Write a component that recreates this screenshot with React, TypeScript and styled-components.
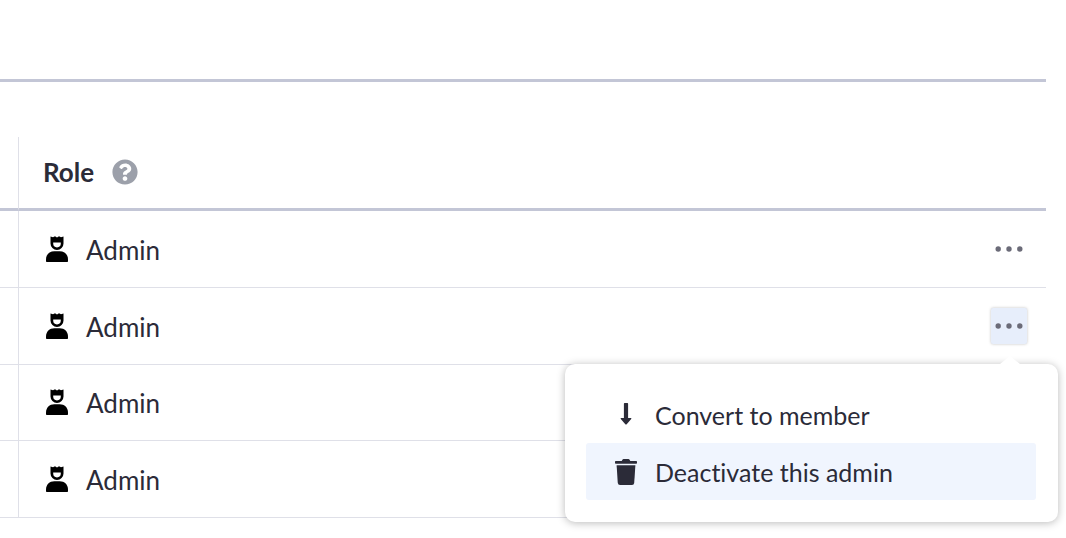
import React from "react";
import styled, { createGlobalStyle } from "styled-components";

const GlobalStyle = createGlobalStyle`
  *, *::before, *::after { box-sizing: border-box; }
  body {
    margin: 0;
    background: #fff;
    color: #2b2b38;
    font-family: Lato, "Liberation Sans", sans-serif;
    font-size: 26px;
    line-height: 32px;
    font-variant-ligatures: none;
  }
`;

const Page = styled.main`
  min-height: 100vh;
  padding-right: 20px;
`;

const Toolbar = styled.header`
  height: 82px;
  margin-bottom: 55px;
  border-bottom: 3px solid #c3c6d6;
`;

const Table = styled.table`
  width: 100%;
  height: 381px;
  border-collapse: separate;
  border-spacing: 0;
`;

const HeadCell = styled.th`
  height: 74px;
  padding: 0 0 2px 24px;
  border-bottom: 3px solid #c3c6d6;
  text-align: left;
  font-weight: 700;
`;

const Cell = styled.td`
  height: 76px;
  padding: 0 0 0 24px;
  border-bottom: 1px solid #dfe0e8;
`;

const GutterHead = styled.td`
  width: 19px;
  padding: 0;
  border-right: 1px solid #dfe0e8;
  border-bottom: 3px solid #c3c6d6;
`;

const GutterCell = styled.td`
  width: 19px;
  padding: 0;
  border-right: 1px solid #dfe0e8;
  border-bottom: 1px solid #dfe0e8;
`;

const HeadLabel = styled.div`
  display: flex;
  align-items: center;
  gap: 18px;
`;

const HelpButton = styled.button`
  display: flex;
  padding: 0;
  border: 0;
  background: none;
`;

const RowContent = styled.div`
  display: flex;
  align-items: center;
  justify-content: space-between;
  padding-right: 19px;
`;

const Role = styled.div`
  display: flex;
  align-items: center;
  gap: 18px;
  padding-left: 3px;
`;

const RoleName = styled.span`
  padding-top: 2px;
`;

const Actions = styled.div`
  position: relative;
`;

const MoreButton = styled.button<{ $open: boolean }>`
  display: flex;
  align-items: center;
  justify-content: center;
  width: 36px;
  height: 36px;
  padding: 0;
  border: 0;
  border-radius: 2px;
  color: #6b6b78;
  background: ${(p) => (p.$open ? "#e7eefb" : "transparent")};
  box-shadow: ${(p) => (p.$open ? "0 0 3px rgba(0, 0, 0, 0.25)" : "none")};
`;

const Menu = styled.div`
  position: absolute;
  z-index: 1;
  top: 56px;
  right: -31px;
  width: 493px;
  padding: 22px 22px 22px 21px;
  border-radius: 10px;
  background: #fff;
  box-shadow: 0 1px 8px rgba(0, 0, 0, 0.28);

  &::before {
    content: "";
    position: absolute;
    right: 38px;
    bottom: 100%;
    border: 10px solid transparent;
    border-top: 0;
    border-bottom: 8px solid #fff;
  }
`;

const MenuItem = styled.button<{ $active?: boolean }>`
  display: flex;
  align-items: center;
  gap: 18px;
  width: 100%;
  height: 57px;
  padding: 2px 29px 0;
  border: 0;
  border-radius: 3px;
  background: ${(p) => (p.$active ? "#f0f5fe" : "transparent")};
  color: inherit;
  font: inherit;
  font-size: 25px;
  font-variant-ligatures: none;
  text-align: left;
  white-space: nowrap;
`;

const AdminIcon = () => (
  <svg width="22" height="26" viewBox="0 0 22 26" aria-hidden="true">
    <path
      fillRule="evenodd"
      d="M4.5 0.4 7 1.3 9 0.2 11 1.4 13 0.2 15 1.3 17.5 0.4V7.4A6.5 6.5 0 0 1 4.5 7.4ZM7.2 6.4V7.6A3.8 3.8 0 0 0 14.8 7.6V6.4Z"
    />
    <path d="M0.8 26Q0 26 0 25.2V23.4C0 18.6 3.4 15.2 8.4 15.2H13.6C18.6 15.2 22 18.6 22 23.4V25.2Q22 26 21.2 26Z" />
  </svg>
);

const HelpIcon = () => (
  <svg width="26" height="26" viewBox="0 0 512 512" aria-hidden="true">
    <path
      fill="#9ca0aa"
      d="M504 256c0 136.997-111.043 248-248 248S8 392.997 8 256C8 119.083 119.043 8 256 8s248 111.083 248 248zM262.655 90c-54.497 0-89.255 22.957-116.549 63.758-3.536 5.286-2.353 12.415 2.715 16.258l34.699 26.31c5.205 3.947 12.621 3.008 16.665-2.122 17.864-22.658 30.113-35.797 57.303-35.797 20.429 0 45.698 13.148 45.698 32.958 0 14.976-12.363 22.667-32.534 33.976C247.128 238.528 216 254.941 216 296v4c0 6.627 5.373 12 12 12h56c6.627 0 12-5.373 12-12v-1.333c0-28.462 83.186-29.647 83.186-106.667 0-58.002-60.165-102-116.531-102zM256 338c-25.365 0-46 20.635-46 46 0 25.364 20.635 46 46 46s46-20.636 46-46c0-25.365-20.635-46-46-46z"
    />
  </svg>
);

const DotsIcon = () => (
  <svg width="28" height="6" viewBox="0 0 28 6" fill="currentColor" aria-hidden="true">
    <circle cx="3.2" cy="3" r="2.7" />
    <circle cx="14" cy="3" r="2.7" />
    <circle cx="24.8" cy="3" r="2.7" />
  </svg>
);

const ArrowDownIcon = () => (
  <svg width="22" height="26" viewBox="0 0 22 26" fill="currentColor" aria-hidden="true">
    <path d="M9.6 1H12.4Q13.1 1 13.1 1.7V16H15.8Q16.9 16.2 16.2 17.1L11.7 22.2Q11 22.9 10.3 22.2L5.8 17.1Q5.1 16.2 6.2 16H8.9V1.7Q8.9 1 9.6 1Z" />
  </svg>
);

const TrashIcon = () => (
  <svg width="22" height="26" viewBox="0 0 22 26" fill="currentColor" aria-hidden="true">
    <path d="M0.8 2H6.7L7.6 0.5Q7.9 0 8.5 0H13.5Q14.1 0 14.4 0.5L15.3 2H21.2Q22 2 22 2.8V4Q22 4.8 21.2 4.8H0.8Q0 4.8 0 4V2.8Q0 2 0.8 2Z" />
    <path d="M1.6 6.3H20.4L19.2 24Q19 26 17 26H5Q3 26 2.8 24Z" />
  </svg>
);

const admins = [1, 2, 3, 4];
const openAdmin = 2;
const hiddenActionsFrom = 3;

export default function App() {
  return (
    <>
      <GlobalStyle />
      <Page>
        <Toolbar />
        <Table>
          <thead>
            <tr>
              <GutterHead />
              <HeadCell scope="col">
                <HeadLabel>
                  Role
                  <HelpButton type="button" aria-label="About roles">
                    <HelpIcon />
                  </HelpButton>
                </HeadLabel>
              </HeadCell>
            </tr>
          </thead>
          <tbody>
            {admins.map((id) => (
              <tr key={id}>
                <GutterCell />
                <Cell>
                  <RowContent>
                    <Role>
                      <AdminIcon />
                      <RoleName>Admin</RoleName>
                    </Role>
                    {id < hiddenActionsFrom && (
                      <Actions>
                        <MoreButton
                          type="button"
                          aria-label="More actions"
                          aria-haspopup="menu"
                          aria-expanded={id === openAdmin}
                          $open={id === openAdmin}
                        >
                          <DotsIcon />
                        </MoreButton>
                        {id === openAdmin && (
                          <Menu role="menu">
                            <MenuItem type="button" role="menuitem">
                              <ArrowDownIcon />
                              Convert to member
                            </MenuItem>
                            <MenuItem type="button" role="menuitem" $active>
                              <TrashIcon />
                              Deactivate this admin
                            </MenuItem>
                          </Menu>
                        )}
                      </Actions>
                    )}
                  </RowContent>
                </Cell>
              </tr>
            ))}
          </tbody>
        </Table>
      </Page>
    </>
  );
}
